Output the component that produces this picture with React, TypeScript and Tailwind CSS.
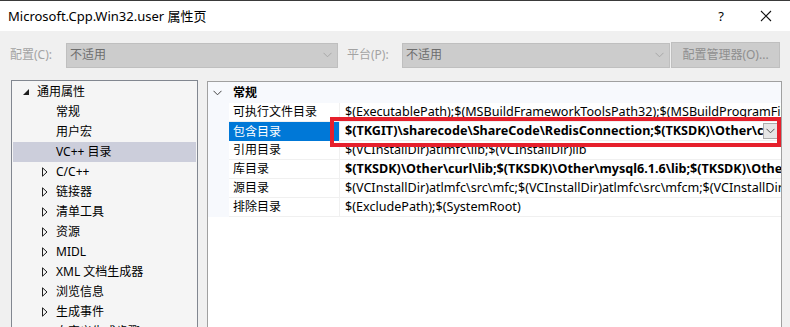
const treeItems: { label: string; expander: boolean }[] = [
  { label: 'C/C++', expander: true },
  { label: '链接器', expander: true },
  { label: '清单工具', expander: true },
  { label: '资源', expander: true },
  { label: 'MIDL', expander: true },
  { label: 'XML 文档生成器', expander: true },
  { label: '浏览信息', expander: true },
  { label: '生成事件', expander: true },
  { label: '自定义生成步骤', expander: true },
]

const rows: { name: string; value: string; bold?: boolean; selected?: boolean }[] = [
  { name: '可执行文件目录', value: '$(ExecutablePath);$(MSBuildFrameworkToolsPath32);$(MSBuildProgramFiles32)\\Microsoft SDKs' },
  { name: '包含目录', value: '$(TKGIT)\\sharecode\\ShareCode\\RedisConnection;$(TKSDK)\\Other\\curl\\include', bold: true, selected: true },
  { name: '引用目录', value: '$(VCInstallDir)atlmfc\\lib;$(VCInstallDir)lib' },
  { name: '库目录', value: '$(TKSDK)\\Other\\curl\\lib;$(TKSDK)\\Other\\mysql6.1.6\\lib;$(TKSDK)\\Other\\redis\\lib', bold: true },
  { name: '源目录', value: '$(VCInstallDir)atlmfc\\src\\mfc;$(VCInstallDir)atlmfc\\src\\mfcm;$(VCInstallDir)atlmfc\\src\\atl' },
  { name: '排除目录', value: '$(ExcludePath);$(SystemRoot)' },
]

function Chevron({ className }: { className?: string }) {
  return (
    <svg width="9" height="6" viewBox="0 0 9 6" className={className}>
      <path d="M0.5 0.8 L4.5 4.8 L8.5 0.8" fill="none" stroke="currentColor" strokeWidth="1" />
    </svg>
  )
}

function Expander() {
  return (
    <svg width="6" height="10" viewBox="0 0 6 10">
      <path d="M0.5 0.8 L5 5 L0.5 9.2 Z" fill="none" stroke="#1e1e1e" strokeWidth="1" />
    </svg>
  )
}

function Combo({ width }: { width: string }) {
  return (
    <div className={`${width} h-[25px] flex items-center bg-[#cccccc] border border-[#bfbfbf] pl-[3px] pr-[5px]`}>
      <span className="flex-1 text-[#6d6d6d]">不适用</span>
      <Chevron className="text-[#a8a8a8]" />
    </div>
  )
}

export default function App() {
  return (
    <div className="relative w-[790px] h-[327px] overflow-hidden bg-[#f0f0f0] text-[12px] text-black font-['Noto_Sans','Noto_Sans_CJK_SC',sans-serif] leading-none">
      {/* title bar */}
      <div className="h-[31px] bg-white border-t border-[#3a3a3a] flex items-center">
        <span className="pl-[8px] text-[13px] flex-1">Microsoft.Cpp.Win32.user 属性页</span>
        <span className="w-[46px] text-center text-[13px]">?</span>
        <span className="w-[46px] text-center pr-[2px]">
          <svg width="12" height="12" viewBox="0 0 12 12" className="inline">
            <path d="M1 1 L11 11 M11 1 L1 11" stroke="#111" strokeWidth="1.1" />
          </svg>
        </span>
      </div>

      {/* configuration row */}
      <div className="mt-[11px] h-[26px] flex items-center">
        <span className="w-[66px] pl-[10px] text-[#a3a3a3]">配置(C):</span>
        <Combo width="w-[272px]" />
        <span className="w-[64px] pl-[9px] text-[#a3a3a3]">平台(P):</span>
        <Combo width="w-[268px]" />
        <div className="ml-[1px] w-[109px] h-[26px] flex items-center justify-center bg-[#cccccc] border border-[#bfbfbf] text-[#8f8f8f]">
          配置管理器(O)...
        </div>
      </div>

      {/* main */}
      <div className="mt-[12px] flex h-[250px]">
        {/* tree */}
        <div className="ml-[11px] w-[187px] h-[260px] border border-[#828790] bg-[#f5f5f5] p-[1px] overflow-hidden">
          <div className="h-5 flex items-center">
            <svg width="6" height="6" viewBox="0 0 6 6" className="ml-[10px]">
              <path d="M6 0 L6 6 L0 6 Z" fill="#1e1e1e" />
            </svg>
            <span className="ml-[8px]">通用属性</span>
          </div>
          <div className="h-5 flex items-center pl-[43px]">常规</div>
          <div className="h-5 flex items-center pl-[43px]">用户宏</div>
          <div className="h-5 flex items-center pl-[43px] bg-[#cccedb]">VC++ 目录</div>
          {treeItems.map((t) => (
            <div key={t.label} className="h-5 flex items-center">
              <span className="w-[43px] flex justify-end pr-[8px]">{t.expander && <Expander />}</span>
              <span>{t.label}</span>
            </div>
          ))}
        </div>

        {/* property grid */}
        <div className="ml-[9px] mt-[1px] w-[575px] h-[260px] border border-[#a0a0a0] bg-white overflow-hidden">
          <div className="h-[21px] flex items-center bg-[#f7f9fd]">
            <Chevron className="ml-[5px] text-[#444]" />
            <span className="ml-[11px] font-bold">常规</span>
          </div>
          {rows.map((r) => (
            <div key={r.name} className="flex h-[19px]">
              <div className="w-[21px] bg-[#f7f9fd]" />
              <div
                className={`w-[111px] flex items-center pl-[4px] border-r border-[#f0f0f0] ${
                  r.selected ? 'bg-[#0078d7] text-white' : 'border-b'
                }`}
              >
                {r.name}
              </div>
              <div className="relative flex-1 flex items-center pl-[5px] border-b border-[#f0f0f0] overflow-hidden whitespace-nowrap">
                <span className={`text-[12.6px] ${r.bold ? 'font-bold' : ''}`}>{r.value}</span>
                {r.selected && (
                  <div className="absolute right-[3px] top-[1px] w-[15px] h-[16px] bg-[#e6e6e6] border border-[#acacac] flex items-center justify-center">
                    <Chevron className="text-[#555]" />
                  </div>
                )}
              </div>
            </div>
          ))}
        </div>
      </div>

      {/* red highlight */}
      <div className="absolute left-[330px] top-[117px] w-[451px] h-[30px] border-4 border-[#e6202c]" />
    </div>
  )
}
